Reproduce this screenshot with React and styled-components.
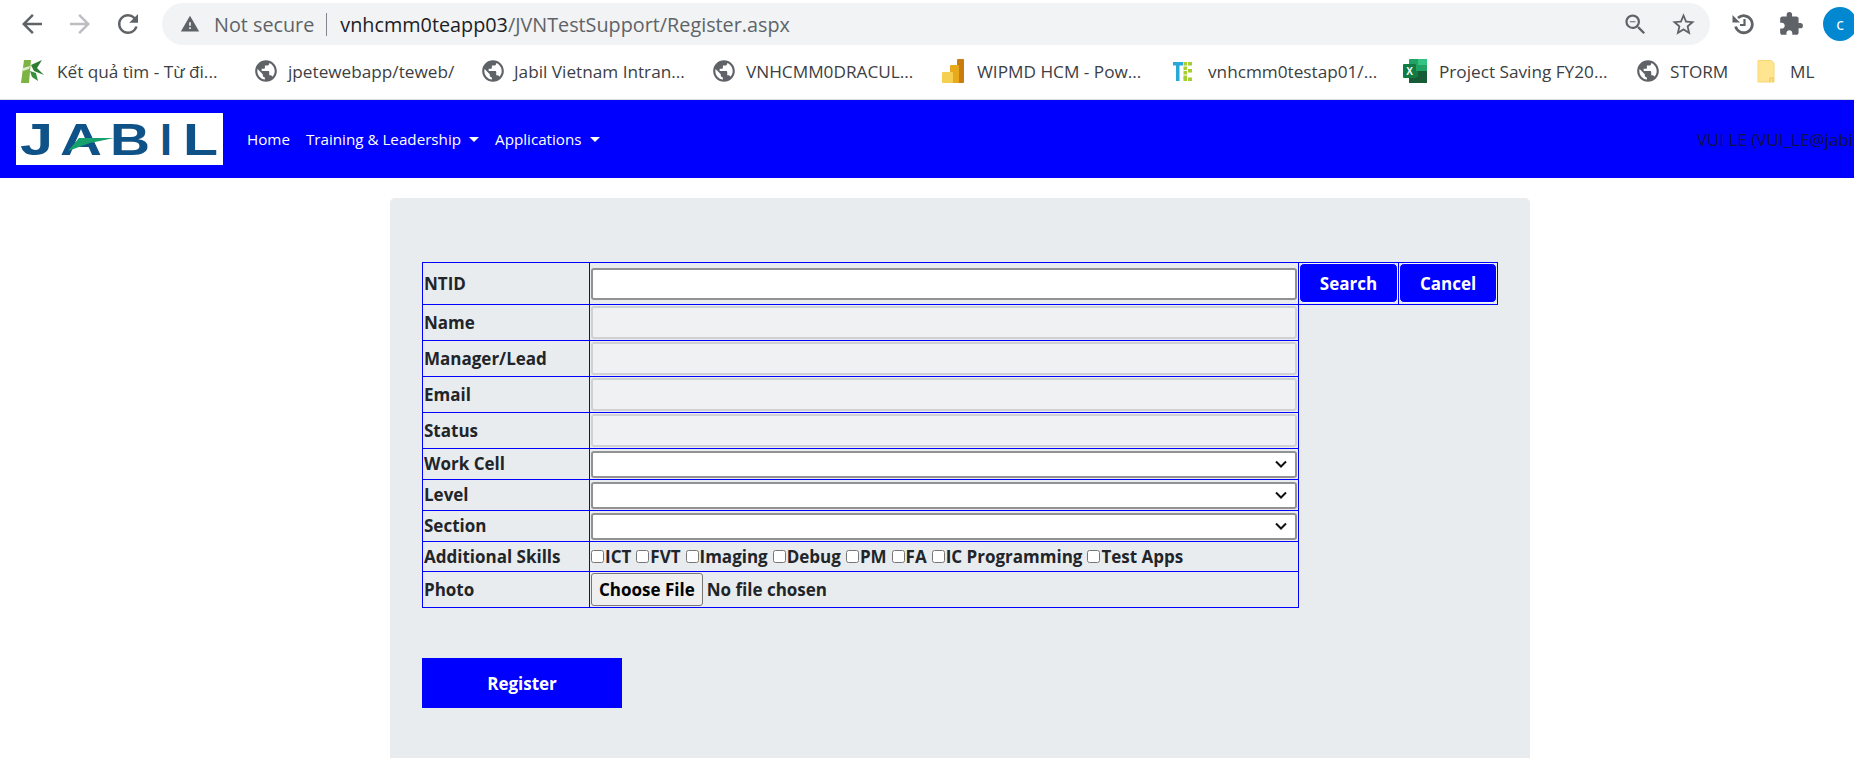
import React from 'react'
import styled, { createGlobalStyle } from 'styled-components'
import {
  MdArrowBack,
  MdArrowForward,
  MdRefresh,
  MdWarning,
  MdZoomOut,
  MdStarBorder,
  MdExtension,
  MdPublic,
} from 'react-icons/md'

const GlobalStyle = createGlobalStyle`
  html, body {
    margin: 0;
    height: 100%;
    overflow: hidden;
    background: #fff;
  }
  * {
    box-sizing: border-box;
  }
`

const chromeFont = `"Open Sans", "Noto Sans", sans-serif`
const pageFont = `"Open Sans", "Noto Sans", sans-serif`

const chevron = `url("data:image/svg+xml,%3Csvg xmlns='http://www.w3.org/2000/svg' width='12' height='8' viewBox='0 0 12 8'%3E%3Cpath d='M1 1.5l5 5 5-5' fill='none' stroke='%23111' stroke-width='2'/%3E%3C/svg%3E")`

const Browser = styled.div`
  width: 1854px;
  height: 758px;
  overflow: hidden;
`

const Toolbar = styled.div`
  display: flex;
  align-items: center;
  height: 48px;
  padding: 0 0 0 8px;
  color: #5f6368;
  font-family: ${chromeFont};
`

const IconSlot = styled.div`
  flex: none;
  width: 48px;
  display: flex;
  align-items: center;
  justify-content: center;
  color: ${(props) => (props.$faded ? '#bcbec1' : '#5f6368')};
`

const AddressBar = styled.div`
  flex: none;
  width: 1548px;
  height: 42px;
  margin-left: 10px;
  margin-right: 9px;
  padding: 0 13px 0 18px;
  display: flex;
  align-items: center;
  background: #f1f3f4;
  border-radius: 21px;
`

const NotSecure = styled.span`
  margin-left: 14px;
  font-size: 19.8px;
  color: #5f6368;
  white-space: nowrap;
`

const Divider = styled.span`
  width: 1px;
  height: 23px;
  margin: 0 13px 0 12px;
  background: #80868b;
`

const Url = styled.span`
  flex: 1;
  font-size: 19.8px;
  color: #5f6368;
  white-space: nowrap;
  & b {
    font-weight: 400;
    color: #202124;
  }
`

const AddressIcons = styled.div`
  display: flex;
  align-items: center;
  gap: 21px;
  color: #5f6368;
`

const Avatar = styled.div`
  flex: none;
  width: 34px;
  height: 34px;
  margin-left: 8px;
  border-radius: 50%;
  background: #0288d1;
  color: #fff;
  font-size: 16px;
  display: flex;
  align-items: center;
  justify-content: center;
`

const BookmarkBar = styled.div`
  display: flex;
  align-items: center;
  height: 52px;
  padding: 0 0 5px 20px;
  border-bottom: 1px solid #dadce0;
  font-family: ${chromeFont};
`

const Bookmark = styled.div`
  flex: none;
  width: ${(props) => props.$w}px;
  display: flex;
  align-items: center;
  color: #3c4043;
  font-size: 17.2px;
  white-space: nowrap;
  & svg {
    flex: none;
  }
`

const BookmarkIcon = styled.span`
  flex: none;
  width: ${(props) => props.$gap}px;
  display: flex;
  color: #5f6368;
`

const NavBar = styled.nav`
  width: 1920px;
  height: 78px;
  padding: 0 16px;
  display: flex;
  align-items: center;
  background: #0000ff;
  font-family: ${pageFont};
`

const Brand = styled.div`
  flex: none;
  width: 207px;
  height: 52px;
  margin-right: 16px;
  background: #fff;
  display: flex;
`

const NavList = styled.div`
  display: flex;
  align-items: center;
`

const NavItem = styled.a`
  padding: 8px;
  color: #fff;
  font-size: 15.2px;
  white-space: nowrap;
  display: flex;
  align-items: center;
`

const Caret = styled.span`
  display: inline-block;
  margin-left: 8px;
  border-top: 5px solid #fff;
  border-left: 5px solid transparent;
  border-right: 5px solid transparent;
`

const UserName = styled.span`
  margin-left: auto;
  padding-right: 3px;
  color: #10104a;
  font-size: 17px;
  white-space: nowrap;
`

const Panel = styled.div`
  width: 1140px;
  margin: 20px 0 0 390px;
  padding: 64px 32px;
  background: #e9ecef;
  border-radius: 5px;
  color: #212529;
  font-family: ${pageFont};
  font-size: 17px;
  font-weight: 700;
`

const FormTable = styled.table`
  width: 1075px;
  table-layout: fixed;
  border-collapse: collapse;
`

const Row = styled.tr`
  height: ${(props) => props.$h}px;
`

const Cell = styled.td`
  border: 1px solid #0000ff;
  padding: 1px;
  vertical-align: middle;
  white-space: nowrap;
  line-height: 22px;
`

const ButtonCell = styled(Cell)`
  padding: 0 0 1px;
`

const TextInput = styled.input`
  display: block;
  width: 100%;
  height: ${(props) => (props.disabled ? 33 : 32)}px;
  padding: 1px 2px;
  border: 2px solid ${(props) => (props.disabled ? '#d0d1d3' : '#929292')};
  border-radius: 3px;
  background: ${(props) => (props.disabled ? '#f0f1f3' : '#fff')};
`

const Select = styled.select`
  display: block;
  width: 100%;
  height: 27px;
  appearance: none;
  border: 2px solid #929292;
  border-radius: 3px;
  background: #fff ${chevron} no-repeat right 8px center;
`

const ActionButton = styled.button`
  display: block;
  width: 100%;
  height: 40px;
  padding: 2px 0 0;
  border: 1px solid #f4f6f8;
  border-radius: 5px;
  background: #0000ff;
  color: #fff;
  font: inherit;
`

const SkillList = styled.div`
  display: flex;
  align-items: center;
  gap: 5px;
`

const Skill = styled.label`
  display: flex;
  align-items: center;
`

const SkillBox = styled.input`
  width: 13px;
  height: 13px;
  margin: 0 1px 0 0;
`

const FileInput = styled.input`
  display: block;
  font: inherit;
  color: #212529;
  &::file-selector-button {
    height: 33px;
    padding: 0 7px;
    margin-right: 4px;
    border: 1px solid #767676;
    border-radius: 3px;
    background: #efefef;
    color: #000;
    font: inherit;
  }
`

const RegisterButton = styled.button`
  display: block;
  width: 200px;
  height: 50px;
  margin-top: 50px;
  border: none;
  background: #0000ff;
  color: #fff;
  font: inherit;
`

const HistoryIcon = () => (
  <svg width="22" height="22" viewBox="0 0 22 22">
    <path d="M6 5 A 8.5 8.5 0 1 1 3.6 13.5" fill="none" stroke="currentColor" strokeWidth="2.8" />
    <path d="M0.5 2 L0.5 9.5 L8 9.5 Z" fill="currentColor" />
    <path d="M12.5 6 V12 H8" fill="none" stroke="currentColor" strokeWidth="2.2" />
  </svg>
)

const BambooIcon = () => (
  <svg width="25" height="24" viewBox="0 0 25 24">
    <path d="M1 24 L4 1 L11 1 L9 24 Z" fill="#7cb342" />
    <path d="M3 9 L10 7 L9 10 L3 12 Z" fill="#dcedc8" />
    <path d="M11 6 L22 1 L17 9 L24 16 L14 12 Z" fill="#2e7d32" />
    <path d="M10 12 L16 14 L18 22 L12 18 Z" fill="#388e3c" />
  </svg>
)

const PowerBiIcon = () => (
  <svg width="22" height="24" viewBox="0 0 22 24">
    <rect x="15" y="0" width="7" height="24" rx="1" fill="#c87d0e" />
    <rect x="8" y="6" width="9" height="18" rx="1" fill="#e8a91a" />
    <rect x="0" y="13" width="11" height="11" rx="1" fill="#f5cf50" />
  </svg>
)

const TeIcon = () => (
  <svg width="20" height="24" viewBox="0 0 20 24">
    <rect x="0" y="3" width="10" height="3.5" fill="#29a9d8" />
    <rect x="3" y="3" width="3.5" height="19" fill="#29a9d8" />
    {[3, 7.5, 12, 16.5].map((y) => (
      <rect key={y} x="10.5" y={y} width="3.5" height="3.5" fill="#a4cf2f" />
    ))}
    {[3, 10, 18.5].map((y) => (
      <rect key={y} x="15" y={y} width="4" height="3.5" fill="#a4cf2f" />
    ))}
    <rect x="10.5" y="18.5" width="3.5" height="3.5" fill="#a4cf2f" />
  </svg>
)

const ExcelIcon = () => (
  <svg width="24" height="24" viewBox="0 0 24 24">
    <rect x="6" y="0" width="18" height="24" rx="1" fill="#21a366" />
    <rect x="15" y="0" width="9" height="6" fill="#33c481" />
    <rect x="6" y="12" width="9" height="6" fill="#107c41" />
    <rect x="15" y="12" width="9" height="6" fill="#185c37" />
    <rect x="6" y="18" width="18" height="6" fill="#185c37" />
    <rect x="0" y="5" width="13" height="14" rx="1" fill="#107c41" />
    <text x="6.5" y="16" fontSize="10" fontWeight="700" fontFamily="Liberation Sans, sans-serif" fill="#fff" textAnchor="middle">X</text>
  </svg>
)

const NoteIcon = () => (
  <svg width="18" height="23" viewBox="0 0 18 23">
    <path d="M1 0.5 H14 L17 3 V22 H1 Z" fill="#ffe58f" stroke="#f8d775" />
    <path d="M13 22 V18 H16 V22" fill="none" stroke="#e8c35a" />
  </svg>
)

// wordmark stays real text, each letter is fitted on its own
const JabilLogo = () => (
  <svg width="207" height="52" viewBox="0 0 207 52">
    <g fill="#0f5287" fontFamily="Liberation Sans, Arial, sans-serif" fontWeight="700" fontSize="45">
      <text x="4" y="42" textLength="33" lengthAdjust="spacingAndGlyphs">J</text>
      <text x="44" y="42" textLength="42" lengthAdjust="spacingAndGlyphs">A</text>
      <text x="94" y="42" textLength="40" lengthAdjust="spacingAndGlyphs">B</text>
      <text x="144" y="42" textLength="12" lengthAdjust="spacingAndGlyphs">I</text>
      <text x="167" y="42" textLength="35" lengthAdjust="spacingAndGlyphs">L</text>
    </g>
    <path d="M63 25 L98 25 L74 30 L52 38 Z" fill="#15a06c" />
  </svg>
)

const bookmarks = [
  { icon: <BambooIcon />, gap: 37, w: 233, label: 'Kết quả tìm - Từ đi...' },
  { icon: <MdPublic size={26} />, gap: 35, w: 227, label: 'jpetewebapp/teweb/' },
  { icon: <MdPublic size={26} />, gap: 34, w: 231, label: 'Jabil Vietnam Intran...' },
  { icon: <MdPublic size={26} />, gap: 35, w: 231, label: 'VNHCMM0DRACUL...' },
  { icon: <PowerBiIcon />, gap: 35, w: 231, label: 'WIPMD HCM - Pow...' },
  { icon: <TeIcon />, gap: 35, w: 230, label: 'vnhcmm0testap01/...' },
  { icon: <ExcelIcon />, gap: 36, w: 232, label: 'Project Saving FY20...' },
  { icon: <MdPublic size={26} />, gap: 35, w: 122, label: 'STORM' },
  { icon: <NoteIcon />, gap: 33, w: 60, label: 'ML' },
]

const skills = ['ICT', 'FVT', 'Imaging', 'Debug', 'PM', 'FA', 'IC Programming', 'Test Apps']

const App = () => {
  return (
    <Browser>
      <GlobalStyle />
      <Toolbar>
        <IconSlot>
          <MdArrowBack size={30} />
        </IconSlot>
        <IconSlot $faded>
          <MdArrowForward size={30} />
        </IconSlot>
        <IconSlot>
          <MdRefresh size={30} />
        </IconSlot>
        <AddressBar>
          <MdWarning size={20} color="#5f6368" />
          <NotSecure>Not secure</NotSecure>
          <Divider />
          <Url>
            <b>vnhcmm0teapp03</b>/JVNTestSupport/Register.aspx
          </Url>
          <AddressIcons>
            <MdZoomOut size={27} />
            <MdStarBorder size={27} />
          </AddressIcons>
        </AddressBar>
        <IconSlot>
          <HistoryIcon />
        </IconSlot>
        <IconSlot>
          <MdExtension size={26} />
        </IconSlot>
        <Avatar>c</Avatar>
      </Toolbar>
      <BookmarkBar>
        {bookmarks.map((item) => (
          <Bookmark key={item.label} $w={item.w}>
            <BookmarkIcon $gap={item.gap}>{item.icon}</BookmarkIcon>
            {item.label}
          </Bookmark>
        ))}
      </BookmarkBar>
      <NavBar>
        <Brand>
          <JabilLogo />
        </Brand>
        <NavList>
          <NavItem>Home</NavItem>
          <NavItem>
            Training &amp; Leadership
            <Caret />
          </NavItem>
          <NavItem>
            Applications
            <Caret />
          </NavItem>
        </NavList>
        <UserName>VUI LE (VUI_LE@jabil.com)</UserName>
      </NavBar>
      <Panel>
        <FormTable>
          <colgroup>
            <col width="167" />
            <col width="709" />
            <col width="100" />
            <col width="99" />
          </colgroup>
          <tbody>
            <Row $h={42}>
              <Cell>NTID</Cell>
              <Cell>
                <TextInput type="text" />
              </Cell>
              <ButtonCell>
                <ActionButton>Search</ActionButton>
              </ButtonCell>
              <ButtonCell>
                <ActionButton>Cancel</ActionButton>
              </ButtonCell>
            </Row>
            {['Name', 'Manager/Lead', 'Email', 'Status'].map((label) => (
              <Row key={label} $h={36}>
                <Cell>{label}</Cell>
                <Cell>
                  <TextInput type="text" disabled />
                </Cell>
              </Row>
            ))}
            {['Work Cell', 'Level', 'Section'].map((label) => (
              <Row key={label} $h={31}>
                <Cell>{label}</Cell>
                <Cell>
                  <Select>
                    <option></option>
                  </Select>
                </Cell>
              </Row>
            ))}
            <Row $h={30}>
              <Cell>Additional Skills</Cell>
              <Cell>
                <SkillList>
                  {skills.map((skill) => (
                    <Skill key={skill}>
                      <SkillBox type="checkbox" />
                      {skill}
                    </Skill>
                  ))}
                </SkillList>
              </Cell>
            </Row>
            <Row $h={36}>
              <Cell>Photo</Cell>
              <Cell>
                <FileInput type="file" />
              </Cell>
            </Row>
          </tbody>
        </FormTable>
        <RegisterButton>Register</RegisterButton>
      </Panel>
    </Browser>
  )
}

export default App
